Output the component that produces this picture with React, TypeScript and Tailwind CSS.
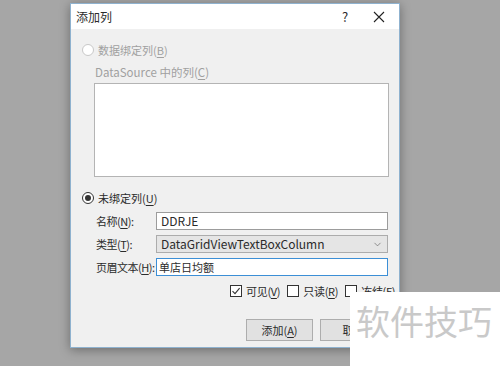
import { ChevronDown } from 'lucide-react';

const font = '"Noto Sans CJK SC", "Noto Sans", sans-serif';

function Radio({ checked, disabled }: { checked?: boolean; disabled?: boolean }) {
  return (
    <span
      className={`flex items-center justify-center w-[12px] h-[12px] rounded-full border bg-white ${
        disabled ? 'border-[#c8c8c8]' : 'border-[#333333]'
      }`}
    >
      {checked && <span className="w-[6px] h-[6px] rounded-full bg-[#333333]" />}
    </span>
  );
}

function Check({ checked }: { checked?: boolean }) {
  return (
    <span className="flex shrink-0 items-center justify-center w-[12px] h-[12px] border border-[#333333] bg-white">
      {checked && (
        <svg width="10" height="10" viewBox="0 0 10 10">
          <path d="M1.5 5.2 L4 7.6 L8.6 2.2" fill="none" stroke="#333" strokeWidth="1.1" />
        </svg>
      )}
    </span>
  );
}

function U({ children }: { children: string }) {
  return <span className="underline underline-offset-2">{children}</span>;
}

export default function App() {
  return (
    <div
      className="relative w-[500px] h-[366px] overflow-hidden bg-[#a6a6a6] text-[11px] text-[#2b2b2b] whitespace-nowrap"
      style={{ fontFamily: font }}
    >
      {/* Dialog */}
      <div className="ml-[70px] mt-[3px] w-[330px] h-[345px] border border-[#8fb2cf] bg-[#f0f0f0] shadow-[0_2px_10px_rgba(0,0,0,0.35)] flex flex-col">
        {/* Title bar */}
        <div className="h-[25px] bg-white flex items-center pl-[5px] pr-[12px]">
          <span className="flex-1 leading-none text-[12px]">添加列</span>
          <span className="w-[20px] text-center mr-[18px] text-[13px]">?</span>
          <svg width="12" height="12" viewBox="0 0 12 12" className="mr-[2px]">
            <path d="M1 1 L11 11 M11 1 L1 11" stroke="#222" strokeWidth="1.1" />
          </svg>
        </div>

        {/* Body */}
        <div className="flex flex-col pl-[11px] pr-[11px]">
          <div className="flex items-center gap-[4px] mt-[14px] h-[14px] text-[#a0a0a0]">
            <Radio disabled />
            <span>数据绑定列(<U>B</U>)</span>
          </div>
          <div className="ml-[13px] mt-[8px] h-[14px] leading-[14px] text-[#a0a0a0] text-[11.5px]">
            DataSource 中的列(<U>C</U>)
          </div>
          <div className="ml-[12px] mt-[4px] w-[295px] h-[94px] bg-white border border-[#b4b4b4]" />

          <div className="flex items-center gap-[4px] mt-[14px] h-[14px]">
            <Radio checked />
            <span>未绑定列(<U>U</U>)</span>
          </div>

          <div className="flex flex-col gap-[5px] mt-[7px] ml-[14px]">
            <div className="flex items-center h-[18px]">
              <span className="w-[60px] shrink-0 tracking-[-0.5px]">名称(<U>N</U>):</span>
              <div className="w-[233px] h-[18px] bg-white border border-[#9c9c9c] flex items-center pl-[4px] text-[12px]">DDRJE</div>
            </div>
            <div className="flex items-center h-[18px]">
              <span className="w-[60px] shrink-0 tracking-[-0.5px]">类型(<U>T</U>):</span>
              <div className="w-[233px] h-[18px] bg-[#e5e5e5] border border-[#acacac] flex items-center pl-[4px] pr-[4px] text-[12px]">
                <span className="flex-1">DataGridViewTextBoxColumn</span>
                <ChevronDown size={11} strokeWidth={1.5} color="#666" />
              </div>
            </div>
            <div className="flex items-center h-[18px]">
              <span className="w-[60px] shrink-0 tracking-[-0.5px]">页眉文本(<U>H</U>):</span>
              <div className="w-[233px] h-[18px] bg-white border border-[#3c8fd6] flex items-center pl-[2px]">单店日均额</div>
            </div>
          </div>

          <div className="flex items-center gap-[4px] mt-[8px] h-[14px] ml-[148px] tracking-[-0.3px]">
            <Check checked />
            <span className="mr-[3px]">可见(<U>V</U>)</span>
            <Check />
            <span className="mr-[3px]">只读(<U>R</U>)</span>
            <Check />
            <span>冻结(<U>F</U>)</span>
          </div>

          <div className="flex justify-end gap-[7px] mt-[21px] pr-[1px]">
            <div className="w-[67px] h-[22px] bg-[#e1e1e1] border border-[#adadad] flex items-center justify-center">
              添加(<U>A</U>)
            </div>
            <div className="w-[67px] h-[22px] bg-[#e1e1e1] border border-[#adadad] flex items-center justify-center">
              取消
            </div>
          </div>
        </div>
      </div>

      {/* Watermark */}
      <div className="absolute left-[350px] top-[292px] w-[150px] h-[74px] bg-white flex items-start pl-[6px] pt-[12px]">
        <span className="text-[34px] leading-none text-[#c9c9c9]">软件技巧</span>
      </div>
    </div>
  );
}
